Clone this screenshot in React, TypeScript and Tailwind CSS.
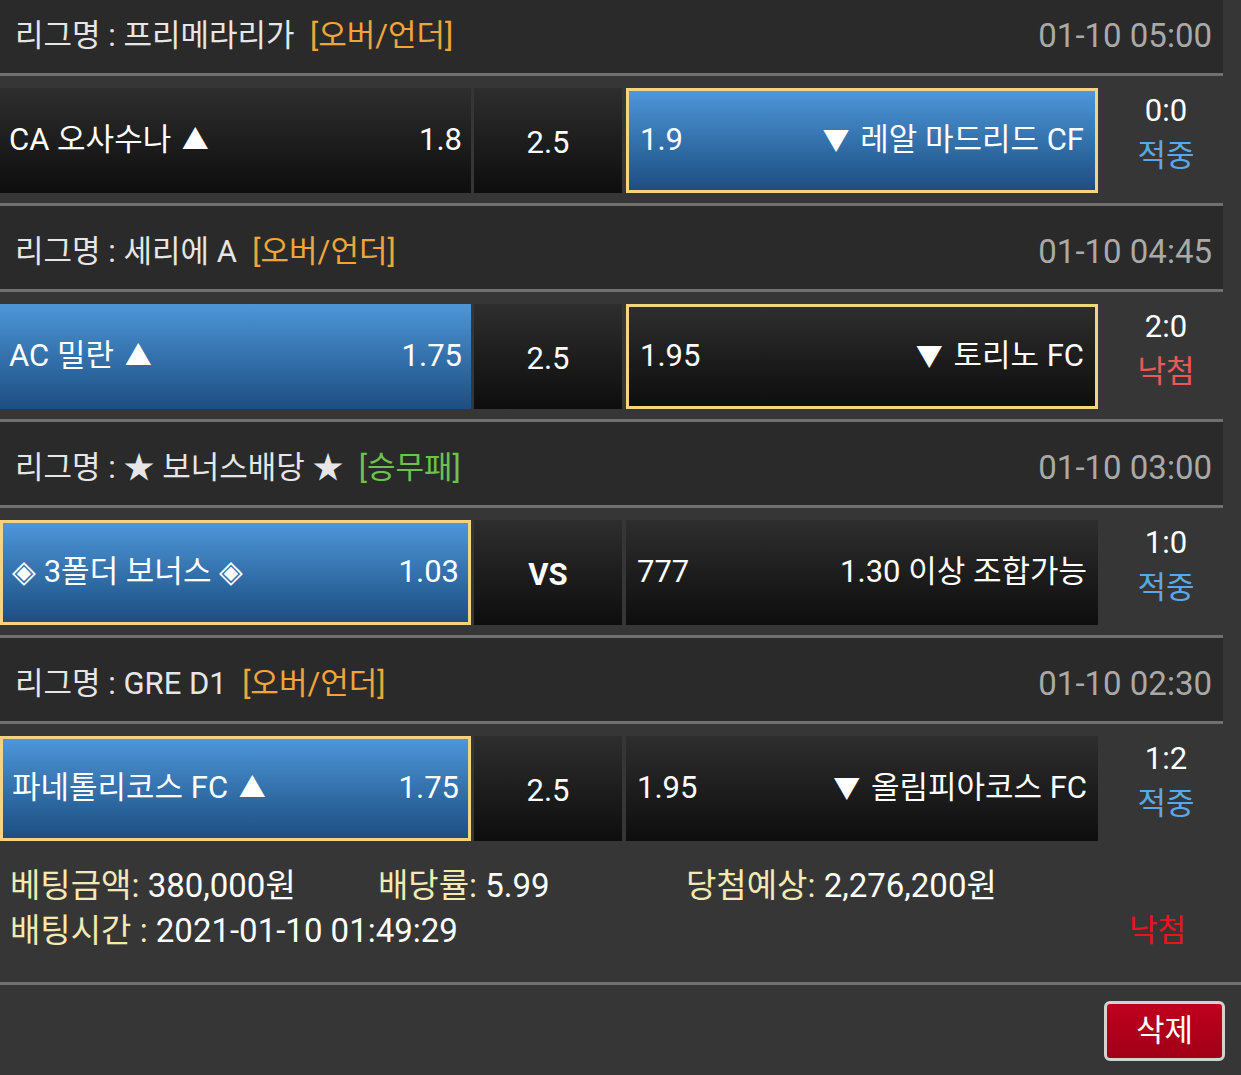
import React from "react";

type Variant = "dark" | "blue" | "picked" | "darkPicked";

interface Side {
    name: string;
    odd: string;
    variant: Variant;
}

interface Game {
    league: string;
    tag: string;
    tagColor: string;
    time: string;
    home: Side;
    mid: string;
    away: Side;
    score: string;
    result: "적중" | "낙첨";
}

const games: Game[] = [
    {
        league: "프리메라리가",
        tag: "[오버/언더]",
        tagColor: "text-[#f0a43c]",
        time: "01-10 05:00",
        home: { name: "CA 오사수나 ▲", odd: "1.8", variant: "dark" },
        mid: "2.5",
        away: { name: "▼ 레알 마드리드 CF", odd: "1.9", variant: "picked" },
        score: "0:0",
        result: "적중",
    },
    {
        league: "세리에 A",
        tag: "[오버/언더]",
        tagColor: "text-[#f0a43c]",
        time: "01-10 04:45",
        home: { name: "AC 밀란 ▲", odd: "1.75", variant: "blue" },
        mid: "2.5",
        away: { name: "▼ 토리노 FC", odd: "1.95", variant: "darkPicked" },
        score: "2:0",
        result: "낙첨",
    },
    {
        league: "★ 보너스배당 ★",
        tag: "[승무패]",
        tagColor: "text-[#6cc24c]",
        time: "01-10 03:00",
        home: { name: "◈ 3폴더 보너스 ◈", odd: "1.03", variant: "picked" },
        mid: "VS",
        away: { name: "1.30 이상 조합가능", odd: "777", variant: "dark" },
        score: "1:0",
        result: "적중",
    },
    {
        league: "GRE D1",
        tag: "[오버/언더]",
        tagColor: "text-[#f0a43c]",
        time: "01-10 02:30",
        home: { name: "파네톨리코스 FC ▲", odd: "1.75", variant: "picked" },
        mid: "2.5",
        away: { name: "▼ 올림피아코스 FC", odd: "1.95", variant: "dark" },
        score: "1:2",
        result: "적중",
    },
];

const cellStyle: Record<Variant, string> = {
    dark: "bg-linear-to-b from-[#2e2e2e] to-[#0e0e0e]",
    blue: "bg-linear-to-b from-[#4d97d9] to-[#1d4e82]",
    picked: "bg-linear-to-b from-[#4d97d9] to-[#1d4e82] border-[3px] border-[#f3d47f]",
    darkPicked: "bg-linear-to-b from-[#2e2e2e] to-[#0e0e0e] border-[3px] border-[#f3d47f]",
};

function Line({ full }: { full?: boolean }) {
    return <div className={`h-[3px] bg-[#707070] ${full ? "w-full" : "w-[1223px]"}`} />;
}

// triangles sit a little apart from the team name in the original
function Team({ text }: { text: string }) {
    const parts = text.split(/([▲▼])/);
    return (
        <span className="whitespace-pre">
            {parts.map((p, i) =>
                p === "▲" || p === "▼" ? (
                    <span key={i} className="text-[27px] mx-[3px]">
                        {p}
                    </span>
                ) : (
                    <React.Fragment key={i}>{p}</React.Fragment>
                )
            )}
        </span>
    );
}

function GameBlock({ game, last }: { game: Game; last: boolean }) {
    return (
        <div>
            {/* league header */}
            <div className="w-[1223px] h-[83px] bg-[#2a2a2a] flex items-center justify-between pt-[9px] pl-[15px] pr-[11px]">
                <div className="text-[31px] text-[#e6e6e6] whitespace-pre">
                    리그명 : {game.league}  <span className={game.tagColor}>{game.tag}</span>
                </div>
                <div className="text-[33px] text-[#a9a9a9]">{game.time}</div>
            </div>
            <Line />
            {/* bet row */}
            <div className={`w-[1223px] flex pt-[12px] ${last ? "" : "pb-[10px]"}`}>
                <div
                    className={`w-[471px] h-[105px] flex items-center justify-between px-[9px] text-white text-[31px] ${cellStyle[game.home.variant]}`}
                >
                    <Team text={game.home.name} />
                    <span>{game.home.odd}</span>
                </div>
                <div className="w-[3px]" />
                <div
                    className={`w-[148px] h-[105px] flex items-center justify-center pt-[6px] text-white text-[31px] ${cellStyle.dark} ${game.mid === "VS" ? "font-bold" : ""}`}
                >
                    {game.mid}
                </div>
                <div className="w-[4px]" />
                <div
                    className={`w-[472px] h-[105px] flex items-center justify-between px-[11px] text-white text-[31px] ${cellStyle[game.away.variant]}`}
                >
                    <span>{game.away.odd}</span>
                    <Team text={game.away.name} />
                </div>
                <div className="flex-1 h-[105px] flex flex-col items-center justify-center pl-[11px] pb-[16px] text-[31px] leading-[45px]">
                    <span className="text-white">{game.score}</span>
                    <span className={game.result === "적중" ? "text-[#5aa9e6]" : "text-[#e85a5a]"}>{game.result}</span>
                </div>
            </div>
            {!last && <Line />}
        </div>
    );
}

export default function App() {
    return (
        <div
            className="w-[1241px] h-[1075px] overflow-hidden bg-[#363636]"
            style={{ fontFamily: "Roboto, 'Noto Sans CJK KR', 'Noto Sans', sans-serif" }}
        >
            <div className="-mt-[10px]">
                {games.map((g, i) => (
                    <GameBlock key={i} game={g} last={i === games.length - 1} />
                ))}
            </div>

            {/* bet summary */}
            <div className="pt-[22px] pb-[29px] pl-[10px] text-[33px] leading-[45px]">
                <div className="flex">
                    <div className="w-[368px]">
                        <span className="text-[#f3eab2]">베팅금액:</span> <span className="text-white">380,000원</span>
                    </div>
                    <div className="w-[308px]">
                        <span className="text-[#f3eab2]">배당률:</span> <span className="text-white">5.99</span>
                    </div>
                    <div>
                        <span className="text-[#f3eab2]">당첨예상:</span> <span className="text-white">2,276,200원</span>
                    </div>
                </div>
                <div className="flex justify-between pr-[55px]">
                    <div>
                        <span className="text-[#f3eab2]">배팅시간 :</span> <span className="text-white">2021-01-10 01:49:29</span>
                    </div>
                    <span className="text-[#e8141e] text-[31px]">낙첨</span>
                </div>
            </div>
            <Line full />

            <div className="flex justify-end pt-[16px] pr-[16px]">
                <button className="w-[121px] h-[60px] rounded-[6px] border-[3px] border-[#d2d2d2] bg-linear-to-b from-[#c0001c] to-[#a00018] text-white text-[31px] flex items-center justify-center">
                    삭제
                </button>
            </div>
        </div>
    );
}
